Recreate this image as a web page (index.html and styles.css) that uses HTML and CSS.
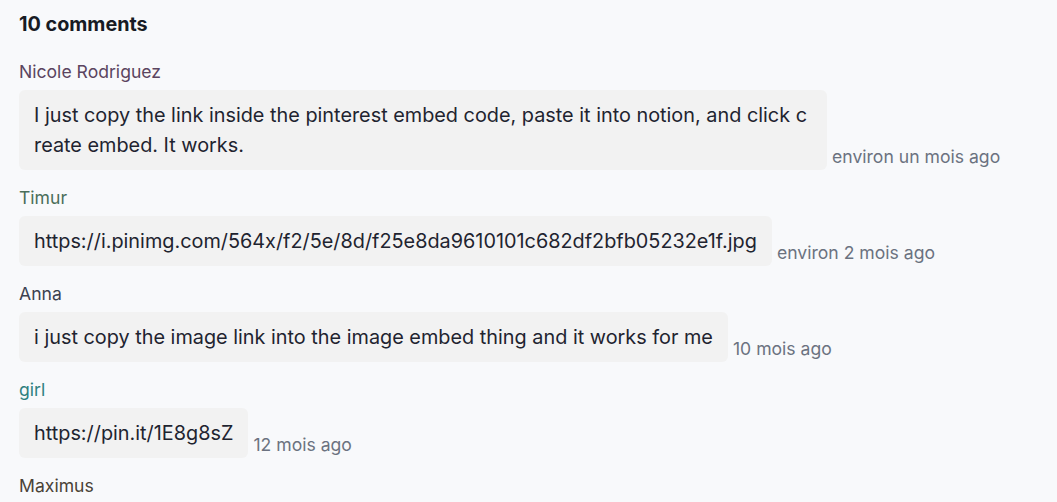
FILE: index.html
```html
<!DOCTYPE html>
<html lang="en">
  <head>
    <meta charset="UTF-8" />
    <meta name="viewport" content="width=device-width, initial-scale=1.0" />
    <title>Comments</title>
    <link rel="stylesheet" href="styles.css">
  </head>
  <body>
    <div class="comments">
      <h2 class="count">10 comments</h2>
      <div class="comment">
        <div class="author author-purple">Nicole Rodriguez</div>
        <div class="row">
          <div class="bubble">I just copy the link inside the pinterest embed code, paste it into notion, and click create embed. It works.</div>
          <span class="time">environ un mois ago</span>
        </div>
      </div>
      <div class="comment">
        <div class="author author-green">Timur</div>
        <div class="row">
          <div class="bubble">https://i.pinimg.com/564x/f2/5e/8d/f25e8da9610101c682df2bfb05232e1f.jpg</div>
          <span class="time">environ 2 mois ago</span>
        </div>
      </div>
      <div class="comment">
        <div class="author author-slate">Anna</div>
        <div class="row">
          <div class="bubble">i just copy the image link into the image embed thing and it works for me</div>
          <span class="time">10 mois ago</span>
        </div>
      </div>
      <div class="comment">
        <div class="author author-teal">girl</div>
        <div class="row">
          <div class="bubble">https://pin.it/1E8g8sZ</div>
          <span class="time">12 mois ago</span>
        </div>
      </div>
      <div class="comment">
        <div class="author author-brown">Maximus</div>
      </div>
    </div>
  </body>
</html>
```

FILE: styles.css
```css
body {
  margin: 0;
  background-color: #f8f9fb;
  font-family: Inter, "Noto Sans", sans-serif;
  color: #1f2430;
}
.comments {
  padding: 10px 19px 0 19px;
  display: flex;
  flex-direction: column;
}
.count {
  margin: 0 0 22px 0;
  font-size: 19.8px;
  line-height: 28px;
  font-weight: 700;
  color: #171b24;
}
.comment {
  display: flex;
  flex-direction: column;
  gap: 6px;
  margin-bottom: 16px;
}
.author {
  font-size: 17.6px;
  line-height: 24px;
}
.author-purple {
  color: #5b4560;
}
.author-green {
  color: #4a6e5a;
}
.author-slate {
  color: #3b4250;
}
.author-teal {
  color: #2f8080;
}
.author-brown {
  color: #4a4236;
}
.row {
  display: flex;
  align-items: flex-end;
  gap: 5px;
}
.bubble {
  max-width: 778px;
  padding: 10px 15px;
  background-color: #f2f2f2;
  border-radius: 6px;
  font-size: 19.85px;
  line-height: 30px;
  color: #1f2430;
  word-break: break-all;
}
.time {
  flex-shrink: 0;
  font-size: 17.6px;
  line-height: 26px;
  color: #6b7280;
}
```
